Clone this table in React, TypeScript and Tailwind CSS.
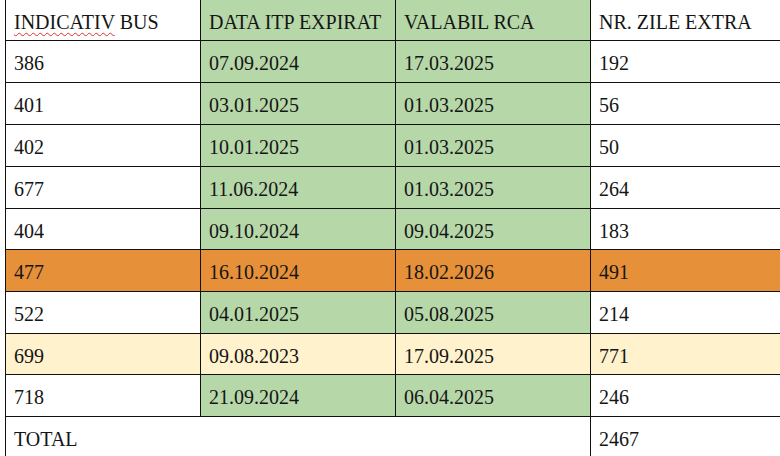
import React from "react";

type Row = { bus: string; itp: string; rca: string; zile: string; kind: "normal" | "orange" | "yellow" };

const rows: Row[] = [
  { bus: "386", itp: "07.09.2024", rca: "17.03.2025", zile: "192", kind: "normal" },
  { bus: "401", itp: "03.01.2025", rca: "01.03.2025", zile: "56", kind: "normal" },
  { bus: "402", itp: "10.01.2025", rca: "01.03.2025", zile: "50", kind: "normal" },
  { bus: "677", itp: "11.06.2024", rca: "01.03.2025", zile: "264", kind: "normal" },
  { bus: "404", itp: "09.10.2024", rca: "09.04.2025", zile: "183", kind: "normal" },
  { bus: "477", itp: "16.10.2024", rca: "18.02.2026", zile: "491", kind: "orange" },
  { bus: "522", itp: "04.01.2025", rca: "05.08.2025", zile: "214", kind: "normal" },
  { bus: "699", itp: "09.08.2023", rca: "17.09.2025", zile: "771", kind: "yellow" },
  { bus: "718", itp: "21.09.2024", rca: "06.04.2025", zile: "246", kind: "normal" },
];

const heights = ["h-[42px]", "h-[42px]", "h-[42px]", "h-[42px]", "h-[41px]", "h-[42px]", "h-[42px]", "h-[41px]", "h-[42px]"];

const cell = "flex items-center pl-[8px] pt-[3px] border-r border-b border-[#111]";

export default function App() {
  return (
    <div
      className="w-[780px] h-[456px] overflow-hidden bg-white text-[20px] text-[#151515]"
      style={{ fontFamily: '"Liberation Serif", "Times New Roman", serif' }}
    >
      <div className="ml-[5px] w-[800px] border-l border-[#111]">
        <div className="grid grid-cols-[195px_195px_195px_215px] h-[41px]">
          <div className={cell}>
            <span>
              <span className="underline decoration-wavy decoration-[#e0302a] decoration-1 underline-offset-[3px]">INDICATIV</span> BUS
            </span>
          </div>
          <div className={`${cell} bg-[#b6d7a8]`}>DATA ITP EXPIRAT</div>
          <div className={`${cell} bg-[#b6d7a8]`}>VALABIL RCA</div>
          <div className={cell}>NR. ZILE EXTRA</div>
        </div>
        {rows.map((r, i) => {
          const rowBg = r.kind === "orange" ? "bg-[#e6913a]" : r.kind === "yellow" ? "bg-[#fff2cc]" : "bg-white";
          const mid = r.kind === "normal" ? "bg-[#b6d7a8]" : "";
          return (
            <div key={r.bus} className={`grid grid-cols-[195px_195px_195px_215px] ${heights[i]} ${rowBg}`}>
              <div className={cell}>{r.bus}</div>
              <div className={`${cell} ${mid}`}>{r.itp}</div>
              <div className={`${cell} ${mid}`}>{r.rca}</div>
              <div className={cell}>{r.zile}</div>
            </div>
          );
        })}
        <div className="grid grid-cols-[585px_215px] h-[42px]">
          <div className={cell}>TOTAL</div>
          <div className={cell}>2467</div>
        </div>
      </div>
    </div>
  );
}
